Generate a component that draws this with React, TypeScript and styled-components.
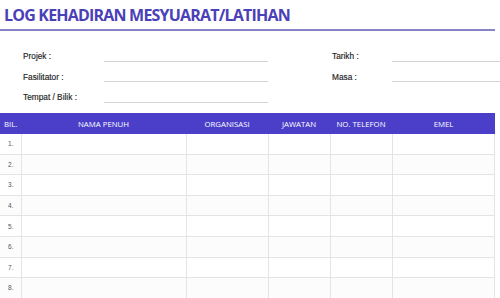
import { createGlobalStyle, styled } from 'styled-components';

const GlobalStyle = createGlobalStyle`
  html, body {
    margin: 0;
    padding: 0;
    background: #ffffff;
  }
  * {
    box-sizing: border-box;
  }
`;

const COLUMNS = [
  { label: 'BIL.', width: 21, align: 'left' },
  { label: 'NAMA PENUH', width: 165, align: 'center' },
  { label: 'ORGANISASI', width: 82, align: 'center' },
  { label: 'JAWATAN', width: 62, align: 'center' },
  { label: 'NO. TELEFON', width: 62, align: 'center' },
  { label: 'EMEL', width: 103, align: 'center' },
];

const GRID = COLUMNS.map((c) => `${c.width}px`).join(' ');
const ROWS = [1, 2, 3, 4, 5, 6, 7, 8];

const App = () => {
  return (
    <Page>
      <GlobalStyle />
      <TitleBar>
        <Title>LOG KEHADIRAN MESYUARAT/LATIHAN</Title>
      </TitleBar>

      <FormGrid>
        <FieldLabel>Projek :</FieldLabel>
        <FieldLine />
        <Spacer />
        <FieldLabel>Tarikh :</FieldLabel>
        <FieldLine />

        <FieldLabel>Fasilitator :</FieldLabel>
        <FieldLine />
        <Spacer />
        <FieldLabel>Masa :</FieldLabel>
        <FieldLine />

        <FieldLabel>Tempat / Bilik :</FieldLabel>
        <FieldLine />
      </FormGrid>

      <Table>
        <HeadRow>
          {COLUMNS.map((c) => (
            <HeadCell key={c.label} $align={c.align}>{c.label}</HeadCell>
          ))}
        </HeadRow>
        {ROWS.map((n) => (
          <BodyRow key={n} $odd={n % 2 === 1}>
            <NumCell>{n}.</NumCell>
            {COLUMNS.slice(1).map((c) => (
              <Cell key={c.label} />
            ))}
          </BodyRow>
        ))}
      </Table>
    </Page>
  );
};

export default App;

const Page = styled.div`
  width: 500px;
  height: 298px;
  overflow: hidden;
  background: #ffffff;
  position: relative;
`;

const TitleBar = styled.div`
  width: 495px;
  height: 31px;
  padding: 4px 0 0 4px;
  border-bottom: 2px solid #8884c8;
`;

const Title = styled.h1`
  margin: 0;
  font-family: 'Open Sans', 'Liberation Sans', sans-serif;
  font-weight: 700;
  font-size: 16px;
  line-height: 22px;
  color: #4a40b8;
  letter-spacing: -0.8px;
`;

const FormGrid = styled.div`
  display: grid;
  grid-template-columns: 81px 164px 64px 60px 1fr;
  grid-auto-rows: 20.5px;
  padding: 10px 0 0 23px;
  height: 82px;
`;

const FieldLabel = styled.div`
  font-family: 'Liberation Sans', Arial, sans-serif;
  font-size: 8.3px;
  color: #1c1c1c;
  display: flex;
  align-items: flex-end;
  padding-bottom: 0.5px;
  -webkit-text-stroke: 0.15px #1c1c1c;
`;

const FieldLine = styled.div`
  border-bottom: 1px solid #d4d4d8;
`;

const Spacer = styled.div``;

const Table = styled.div`
  width: 495px;
`;

const HeadRow = styled.div`
  display: grid;
  grid-template-columns: ${GRID};
  height: 21px;
  background: #4b3fc9;
`;

const HeadCell = styled.div<{ $align: string }>`
  font-family: 'Open Sans', 'Liberation Sans', sans-serif;
  font-size: 7.8px;
  font-weight: 500;
  color: #ffffff;
  display: flex;
  align-items: center;
  justify-content: ${(p) => (p.$align === 'left' ? 'flex-start' : 'center')};
  padding-left: ${(p) => (p.$align === 'left' ? '4px' : '0')};
`;

const BodyRow = styled.div<{ $odd: boolean }>`
  display: grid;
  grid-template-columns: ${GRID};
  height: 20.6px;
  background: ${(p) => (p.$odd ? '#ffffff' : '#fcfcfc')};
  border-bottom: 1px solid #e4e4e6;
  border-right: 1px solid #e4e4e6;
`;

const Cell = styled.div`
  border-left: 1px solid #e4e4e6;
`;

const NumCell = styled.div`
  font-family: 'Liberation Sans', Arial, sans-serif;
  font-size: 6.5px;
  color: #555555;
  display: flex;
  align-items: center;
  padding-left: 8px;
`;
